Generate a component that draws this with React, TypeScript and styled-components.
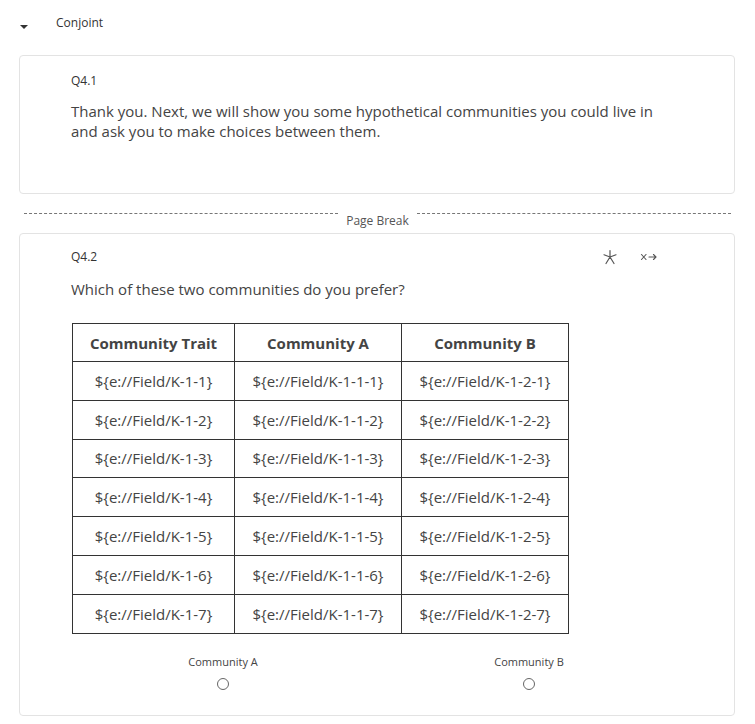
import React from 'react';
import styled, { createGlobalStyle } from 'styled-components';

const GlobalStyle = createGlobalStyle`
  body {
    margin: 0;
    background: #fff;
    font-family: "Open Sans", "Liberation Sans", sans-serif;
    color: #444;
  }
`;

const Page = styled.div`
  width: 755px;
  padding: 0 20px 0 19px;
  box-sizing: border-box;
`;

const BlockHeader = styled.div`
  display: flex;
  align-items: center;
  height: 46px;
  padding-left: 1px;
`;

const Caret = styled.span`
  width: 0;
  height: 0;
  border-left: 4px solid transparent;
  border-right: 4px solid transparent;
  border-top: 4px solid #333;
  margin-top: 8px;
`;

const BlockTitle = styled.span`
  font-size: 12px;
  color: #333;
  margin-left: 28px;
  margin-top: -1px;
`;

const Card = styled.div<{ $height: number; $top: number; $pad: number }>`
  position: relative;
  border: 1px solid #e3e3e3;
  border-radius: 4px;
  height: ${p => p.$height}px;
  box-sizing: border-box;
  padding: ${p => p.$pad}px 0 0 51px;
  margin-top: ${p => p.$top}px;
`;

const QLabel = styled.div`
  font-size: 12px;
  color: #333;
  line-height: 16px;
`;

const QText = styled.div<{ $top: number }>`
  font-size: 15px;
  line-height: 20px;
  color: #444;
  margin-top: ${p => p.$top}px;
  max-width: 600px;
`;

const PageBreak = styled.div`
  display: flex;
  align-items: flex-start;
  gap: 8px;
  margin: 17px 4px 0 5px;
  height: 22px;
`;

const Dash = styled.div`
  flex: 1;
  border-top: 1px dashed #777;
  margin-top: 2px;
`;

const BreakLabel = styled.span`
  font-size: 12px;
  color: #555;
  margin-top: 2px;
  line-height: 16px;
`;

const Tools = styled.div`
  position: absolute;
  top: 15px;
  right: 76px;
  display: flex;
  align-items: center;
  gap: 22px;
  color: #555;
`;

const Table = styled.table`
  border-collapse: collapse;
  margin-top: 24px;
  border: 1px solid #333;
  margin-left: 1px;
`;

const Th = styled.th<{ $w: number }>`
  width: ${p => p.$w}px;
  height: 37px;
  border: 1px solid #333;
  font-size: 15px;
  font-weight: 700;
  color: #444;
  padding: 0;
  text-align: center;
`;

const Td = styled.td`
  height: 37.8px;
  border: 1px solid #333;
  font-size: 15px;
  color: #444;
  padding: 0;
  text-align: center;
`;

const Choices = styled.div`
  display: flex;
  justify-content: space-between;
  width: 406px;
  margin: 20px 0 0 102px;
`;

const Choice = styled.div`
  display: flex;
  flex-direction: column;
  align-items: center;
  gap: 9px;
  width: 100px;
`;

const ChoiceLabel = styled.span`
  font-size: 11px;
  color: #444;
`;

const Radio = styled.span`
  width: 10px;
  height: 10px;
  border: 1px solid #666;
  border-radius: 50%;
`;

const rows = [1, 2, 3, 4, 5, 6, 7];

export default function App() {
  return (
    <Page>
      <GlobalStyle />
      <BlockHeader>
        <Caret />
        <BlockTitle>Conjoint</BlockTitle>
      </BlockHeader>
      <Card $height={139} $top={9} $pad={17}>
        <QLabel>Q4.1</QLabel>
        <QText $top={12}>
          Thank you. Next, we will show you some hypothetical communities you could live in and ask you to make
          choices between them.
        </QText>
      </Card>
      <PageBreak>
        <Dash />
        <BreakLabel>Page Break</BreakLabel>
        <Dash />
      </PageBreak>
      <Card $height={483} $top={0} $pad={15}>
        <QLabel>Q4.2</QLabel>
        <Tools>
          <svg width="16" height="16" viewBox="0 0 16 16" fill="none" stroke="#555" strokeWidth="1.2" strokeLinecap="round">
            <path d="M8 1.5V8M8 8L2 5.8M8 8L14 5.8M8 8L4 14.5M8 8L12 14.5" />
          </svg>
          <svg width="18" height="10" viewBox="0 0 18 10" fill="none" stroke="#555" strokeWidth="1.1" strokeLinecap="round">
            <path d="M1.5 2.5L6 7.5M6 2.5L1.5 7.5M9 5H16M13.5 2.5L16 5L13.5 7.5" />
          </svg>
        </Tools>
        <QText $top={14}>Which of these two communities do you prefer?</QText>
        <Table>
          <thead>
            <tr>
              <Th $w={161}>Community Trait</Th>
              <Th $w={166}>Community A</Th>
              <Th $w={166}>Community B</Th>
            </tr>
          </thead>
          <tbody>
            {rows.map(n => (
              <tr key={n}>
                <Td>{`\${e://Field/K-1-${n}}`}</Td>
                <Td>{`\${e://Field/K-1-1-${n}}`}</Td>
                <Td>{`\${e://Field/K-1-2-${n}}`}</Td>
              </tr>
            ))}
          </tbody>
        </Table>
        <Choices>
          <Choice>
            <ChoiceLabel>Community A</ChoiceLabel>
            <Radio />
          </Choice>
          <Choice>
            <ChoiceLabel>Community B</ChoiceLabel>
            <Radio />
          </Choice>
        </Choices>
      </Card>
    </Page>
  );
}
